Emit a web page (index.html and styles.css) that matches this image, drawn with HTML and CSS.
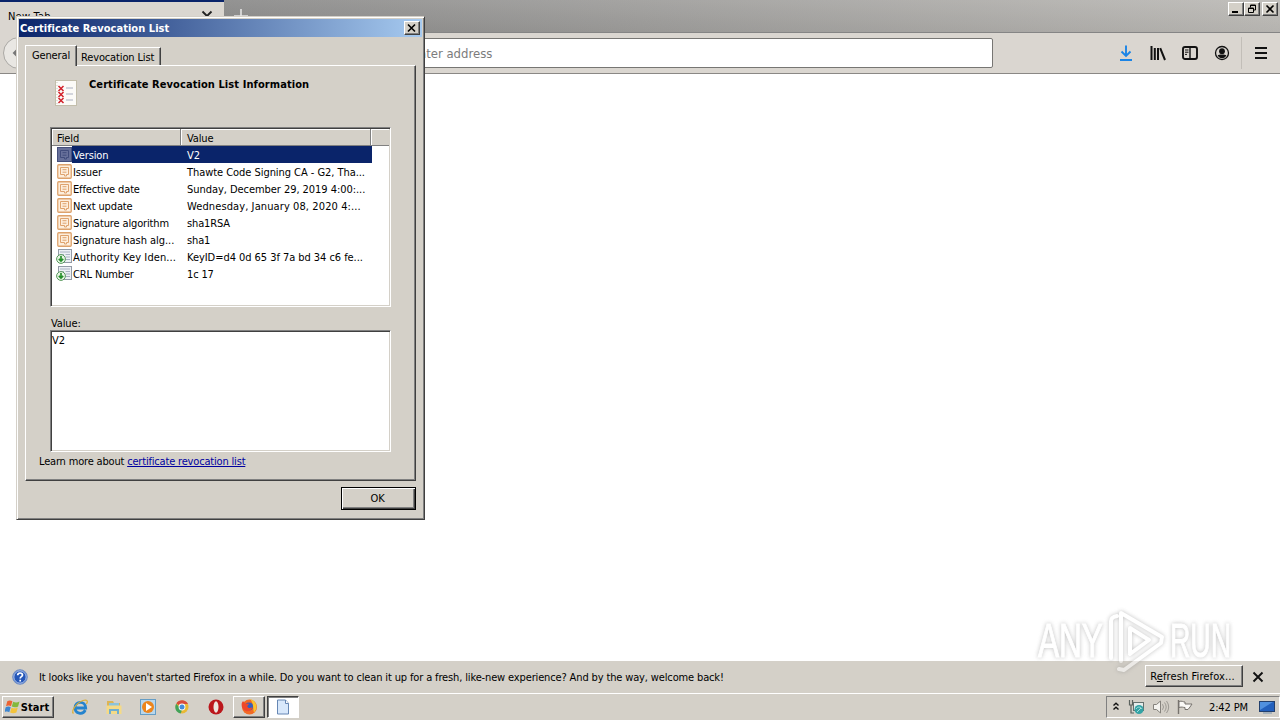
FILE: index.html
```html
<!DOCTYPE html>
<html lang="en">
<head>
    <meta charset="UTF-8">
    <title>New Tab</title>
    <link rel="stylesheet" href="styles.css">
</head>
<body>
    <!-- Shared list icons -->
    <svg class="defs" width="0" height="0">
        <symbol id="field" viewBox="0 0 15 15">
            <rect x=".75" y=".75" width="13.5" height="13.5" rx="1" fill="#fdeedc" stroke="#dda26c" stroke-width="1.3"/>
            <path d="M3.5 3.5h8v7h-2v1.5h-2v-1.5h-4zM5.5 5.7h4M5.5 8.2h4" fill="none" stroke="#dea36e"/>
        </symbol>
        <symbol id="ext" viewBox="0 0 16 15">
            <rect x="2.5" y=".5" width="13" height="13" fill="#edf0f5" stroke="#939ba7"/>
            <path d="M4 3h10M4 5.5h4M9.5 5.5H14M9.5 8H14M9.5 10.5H14" stroke="#a9b2c2"/>
            <circle cx="5" cy="10" r="4.4" fill="#e8f5e5" stroke="#55975a"/>
            <path d="M5 7v5M2.8 9.8L5 12l2.2-2.2" fill="none" stroke="#26902c" stroke-width="1.7"/>
        </symbol>
    </svg>

    <!-- Browser tabs -->
    <div class="tab-bar">
        <div class="browser-tab">
            <span>New Tab</span>
            <svg width="12" height="12" viewBox="0 0 12 12"><path d="M1.5 1.5l9 9M10.5 1.5l-9 9" stroke="#222" stroke-width="1.8"/></svg>
        </div>
        <svg class="new-tab" width="16" height="16" viewBox="0 0 16 16"><path d="M8 1v14M1 8h14" stroke="#e4e4e4" stroke-width="1.6"/></svg>
        <div class="window-buttons">
            <button><svg width="12" height="10" viewBox="0 0 12 10"><path d="M2 8h6" stroke="#000" stroke-width="2"/></svg></button>
            <button><svg width="12" height="10" viewBox="0 0 12 10"><path d="M4.5 3.5V1h5v5H8M4 1.5h6M2 4.5h6M2.5 4v4.5h5V4z" fill="none" stroke="#000"/></svg></button>
            <button class="last"><svg width="12" height="10" viewBox="0 0 12 10"><path d="M2.5 1.5l7 7M9.5 1.5l-7 7" stroke="#000" stroke-width="1.6"/></svg></button>
        </div>
    </div>

    <!-- Toolbar -->
    <div class="toolbar">
        <div class="back"><svg width="16" height="16" viewBox="0 0 16 16"><path d="M8 3L3 8l5 5M3 8h11" fill="none" stroke="#777" stroke-width="2"/></svg></div>
        <div class="url-bar">Search or enter address</div>
        <div class="tools">
            <svg width="16" height="16" viewBox="0 0 16 16"><path d="M8 .5v10M3.5 6.5L8 11l4.5-4.5M2 15h12" fill="none" stroke="#1a84e6" stroke-width="1.9"/></svg>
            <svg width="16" height="16" viewBox="0 0 16 16"><path d="M1.5 1v14M4.8 3v12M8 3v12M10.2 3.2L15 15" fill="none" stroke="#111" stroke-width="2"/></svg>
            <svg width="16" height="16" viewBox="0 0 16 16"><rect x="1" y="2" width="14" height="12" rx="2" fill="none" stroke="#111" stroke-width="1.9"/><path d="M8 2v12" stroke="#111" stroke-width="1.4"/><path d="M3 5h3.5M3 7.2h3.5M3 9.4h2" stroke="#111"/></svg>
            <svg width="16" height="16" viewBox="0 0 16 16"><circle cx="8" cy="8" r="6.5" fill="none" stroke="#111" stroke-width="1.3"/><circle cx="8" cy="6.2" r="2.9" fill="#111"/><path d="M3.6 10.2c1.5-.9 7.3-.9 8.8 0-.8 2-2.5 2.9-4.4 2.900s-3.600-.9-4.400-2.900z" fill="#111"/></svg>
            <span class="divider"></span>
            <svg width="14" height="16" viewBox="0 0 14 16"><path d="M1 3h12M1 8h12M1 13h12" stroke="#111" stroke-width="2"/></svg>
        </div>
    </div>

    <div class="content"></div>

    <!-- Notification -->
    <div class="notification">
        <svg width="16" height="16" viewBox="0 0 16 16"><circle cx="8" cy="8" r="7.3" fill="#2456b8" stroke="#7893c4"/><circle cx="8" cy="8" r="6.2" fill="none" stroke="#dce6fa" stroke-width=".8"/><path d="M5.7 6.3c0-3 4.8-3 4.800-.3 0 1.700-2.300 1.700-2.300 3.500M8.200 10.800v1.800" fill="none" stroke="#fff" stroke-width="1.7"/></svg>
        <span class="message">It looks like you haven't started Firefox in a while. Do you want to clean it up for a fresh, like-new experience? And by the way, welcome back!</span>
        <button class="refresh"><span>R<u>e</u>fresh Firefox...</span></button>
        <svg class="dismiss" width="12" height="12" viewBox="0 0 12 12"><path d="M1.5 1.5l9 9M10.5 1.5l-9 9" stroke="#111" stroke-width="1.9"/></svg>
    </div>

    <!-- Taskbar -->
    <div class="taskbar">
        <button class="start">
            <svg width="16" height="16" viewBox="1 0 16 16"><path d="M3.3 2.2C5 1 7 1.3 8.4 2.2L7 7.2C5.5 6.3 3.7 6.3 2 7.3z" fill="#ec6332"/><path d="M9.2 2.7c2 1 4.2.9 6.3-.3l-1.4 5c-2 1.2-4.3 1-6.3.2z" fill="#83b83c"/><path d="M1.7 8.3c1.7-1 3.5-1 5-.1l-1.4 5c-1.6-.9-3.3-.9-5 .1z" fill="#3d86d0"/><path d="M7.5 8.7c2 .9 4.2.9 6.3-.2l-1.4 5c-2 1.1-4.3 1-6.3.1z" fill="#f3c33c"/></svg>
            <span>Start</span>
        </button>
        <div class="quick-launch">
            <svg width="18" height="18" viewBox="0 0 18 18"><path d="M14.3 12.2c-2.5 5-10.3 3.8-10.3-2.5 0-7 10.5-7.5 10.7.3H5.5" fill="none" stroke="#2583cd" stroke-width="2.8"/><path d="M2.5 15.5C-1 13 7.5 2.3 14.5 2c2.5.1 2 2.4.9 4" fill="none" stroke="#dcae34" stroke-width="1.2"/></svg>
            <svg width="18" height="18" viewBox="0 0 18 18"><path d="M2 3h6l1 2h6v11H2z" fill="#ddb455"/><path d="M4 5h10v5H4z" fill="#8bc3dc"/><path d="M1.5 7.5h15V16h-15z" fill="#f5da86"/><path d="M5 16v-4h8v4" fill="none" stroke="#6faed0" stroke-width="2"/></svg>
            <svg width="18" height="18" viewBox="0 0 18 18"><rect x="1.5" y="1.5" width="15" height="15" fill="#b9d7ec" stroke="#659dc5"/><circle cx="9" cy="9" r="6" fill="#ed851c"/><path d="M7 5l6 4-6 4z" fill="#fff"/></svg>
            <svg width="18" height="18" viewBox="0 0 18 18"><circle cx="9" cy="9" r="6.5" fill="#e9b935"/><path d="M9 9L3.3 5.6C5.5 1.4 12.8 1 15 6H9z" fill="#d94b3c"/><path d="M3.2 5.8L9 12l-1.3 3.4C2.5 14.8 1.2 9.5 3.2 5.8z" fill="#42a25a"/><circle cx="9" cy="9" r="3.4" fill="#fff"/><circle cx="9" cy="9" r="2.5" fill="#468cdb"/></svg>
            <svg width="18" height="18" viewBox="0 0 18 18"><circle cx="9" cy="9" r="7.5" fill="#bb171c"/><ellipse cx="9" cy="9" rx="2.5" ry="5.8" fill="#ece6df"/></svg>
        </div>
        <div class="task firefox">
            <svg width="18" height="18" viewBox="0 0 18 18"><circle cx="9.5" cy="9" r="7.5" fill="#f26a25"/><path d="M10 1c6 1.5 9 8.5 4 13.5-1.3-4 .3-8.5-4-13.5z" fill="#f9c431"/><circle cx="9" cy="8.6" r="4" fill="#345fc0"/><path d="M1.8 5L3 3l2 2.5 4.2.2-2 2.5c1 2.4 3.6 2.3 5.2.8-.2 4.2-5.6 5.5-8.7 2.7C1.8 10 1.3 7.5 1.8 5z" fill="#ef482b"/></svg>
        </div>
        <div class="task active">
            <svg width="16" height="18" viewBox="0 0 16 18"><path d="M2.5 2h8l3 3.3V16h-11z" fill="#d8e8fb" stroke="#6687b4"/><path d="M10.5 2v3.5h3" fill="#fff" stroke="#6687b4"/></svg>
        </div>
        <div class="tray">
            <svg class="chevrons" width="8" height="12" viewBox="0 0 8 12"><path d="M1.5 4.5L4 2.2l2.5 2.3M1.5 8.5L4 6.2l2.5 2.3" fill="none" stroke="#111" stroke-width="1.4"/></svg>
            <svg width="17" height="16" viewBox="0 0 17 16"><path d="M1.5 1v5h3V1M3 6v8h3" fill="none" stroke="#5b625e" stroke-width="1.2"/><rect x="5.5" y="3.5" width="10" height="8" fill="#e5edec" stroke="#66716e"/><circle cx="11" cy="10.5" r="4.5" fill="#33a3a5"/><path d="M8 10c2-3 5-2 6 0M9 13l4-4" fill="none" stroke="#a6dfdd"/></svg>
            <svg width="18" height="16" viewBox="0 0 18 16"><path d="M1.5 5.5h3L8.5 2v12l-4-3.5h-3z" fill="#f4f3ef" stroke="#85827c"/><path d="M10.5 5.2q2 2.8 0 5.6M12.5 3.5q3.4 4.5 0 9M14.5 2q4.4 6 0 12" fill="none" stroke="#9c9993"/></svg>
            <svg width="17" height="16" viewBox="0 0 17 16"><path d="M1.5 1v14" stroke="#77736e" stroke-width="1.4"/><path d="M2 2.5c3-1 4 .5 6 .5v2h7l-2 3-2 2.5H8v-2c-2 0-3-1-6 0z" fill="#faf9f6" stroke="#77736e"/></svg>
            <span class="clock">2:42 PM</span>
            <svg width="16" height="14" viewBox="0 0 16 14"><rect x=".5" y="1.5" width="15" height="10" fill="#2461bd" stroke="#23406d"/><path d="M1 2h13L1 10z" fill="#5191df"/><path d="M4 13h9" stroke="#7893ae"/></svg>
        </div>
    </div>

    <!-- Certificate dialog -->
    <div class="dialog">
        <div class="title-bar">
            <span>Certificate Revocation List</span>
            <button><svg width="10" height="10" viewBox="0 0 10 10"><path d="M1 1.5l7 7M8 1.5l-7 7" stroke="#000" stroke-width="1.6"/></svg></button>
        </div>
        <div class="tabs">
            <div class="tab selected"><span>General</span></div>
            <div class="tab"><span>Revocation List</span></div>
        </div>
        <div class="panel">
            <div class="info">
                <svg width="24" height="28" viewBox="0 0 24 28"><rect x="1.5" y="1.5" width="21" height="25" fill="#fcfbf8" stroke="#c3beab"/><path d="M3 3v22" stroke="#c9c7bd" stroke-dasharray="1 2"/><path d="M4.500 7l5 5M9.500 7l-5 5M4.500 13l5 5M9.500 13l-5 5M4.500 19l5 5M9.500 19l-5 5" stroke="#d2222b" stroke-width="1.500"/><path d="M12 9h7M12 15h7M12 21h7" stroke="#c5c9d2" stroke-width="1.3"/></svg>
                <span>Certificate Revocation List Information</span>
            </div>
            <div class="list">
                <div class="list-head"><span>Field</span><span>Value</span><span></span></div>
                <div class="row chosen">
                    <svg viewBox="0 0 15 15"><rect x=".5" y=".5" width="14" height="14" fill="#67709a" stroke="#454f7c"/><path d="M3.5 3.5h8v7h-2v1.5h-2v-1.5h-4zM5.5 5.7h4M5.5 8.2h4" fill="none" stroke="#414c7c"/></svg>
                    <div class="label"><span>Version</span><span>V2</span></div>
                </div>
                <div class="row"><svg><use href="#field"/></svg><div class="label"><span>Issuer</span><span class="long">Thawte Code Signing CA - G2, Tha...</span></div></div>
                <div class="row"><svg><use href="#field"/></svg><div class="label"><span>Effective date</span><span class="long">Sunday, December 29, 2019 4:00:...</span></div></div>
                <div class="row"><svg><use href="#field"/></svg><div class="label"><span>Next update</span><span class="longer">Wednesday, January 08, 2020 4:...</span></div></div>
                <div class="row"><svg><use href="#field"/></svg><div class="label"><span>Signature algorithm</span><span>sha1RSA</span></div></div>
                <div class="row"><svg><use href="#field"/></svg><div class="label"><span class="long">Signature hash alg...</span><span>sha1</span></div></div>
                <div class="row"><svg class="ext"><use href="#ext"/></svg><div class="label"><span class="longer">Authority Key Iden...</span><span class="long">KeyID=d4 0d 65 3f 7a bd 34 c6 fe...</span></div></div>
                <div class="row"><svg class="ext"><use href="#ext"/></svg><div class="label"><span>CRL Number</span><span>1c 17</span></div></div>
            </div>
            <div class="value-label">Value:</div>
            <div class="value-box">V2</div>
            <div class="learn">Learn more about <a href="#">certificate revocation list</a></div>
        </div>
        <div class="actions"><button>OK</button></div>
    </div>

    <!-- Watermark -->
    <div class="watermark">
        <span class="any">ANY</span>
        <svg width="60" height="66" viewBox="0 0 60 66"><path d="M5 50V13q0-4 6-5M15 53V5l41 24-1 6-37 27-5-1M24 45V20l19 12-19 14" fill="none" stroke="#fff" stroke-width="4" stroke-linejoin="round" stroke-linecap="round"/></svg>
        <span class="run">RUN</span>
    </div>
</body>
</html>
```
FILE: styles.css
```css
* {
    box-sizing: border-box;
}

body {
    margin: 0;
    width: 1280px;
    height: 720px;
    overflow: hidden;
    display: flex;
    flex-direction: column;
    background: #fff;
    color: #000;
    font-family: "DejaVu Sans Condensed", "DejaVu Sans", sans-serif;
    font-stretch: condensed;
    font-size: 11px;
    letter-spacing: -0.14px;
    line-height: 17px;
    white-space: nowrap;
}

svg {
    display: block;
    flex: none;
}

button {
    font: inherit;
    letter-spacing: inherit;
    color: #000;
    background: #d4d0c8;
    border: 1px solid;
    border-color: #fff #404040 #404040 #fff;
    box-shadow: inset -1px -1px #808080;
    padding: 0;
    display: flex;
    align-items: center;
    justify-content: center;
}

.defs {
    position: absolute;
}

/* Browser */
.tab-bar {
    height: 33px;
    flex: none;
    display: flex;
    background: linear-gradient(to bottom, rgba(255, 255, 255, 0.08), rgba(0, 0, 0, 0.04)), linear-gradient(to right, #808080, #bcbab6);
    border-bottom: 1px solid #858585;
}

.browser-tab {
    width: 224px;
    height: 33px;
    border-top: 2px solid #0a246a;
    background: #dad6d0;
    padding: 6px 11px 0 8px;
    display: flex;
    justify-content: space-between;
    letter-spacing: 0.2px;
}

.browser-tab svg {
    margin-top: 2px;
}

.new-tab {
    margin: 8px 0 0 9px;
}

.window-buttons {
    margin: 2px 2px 0 auto;
    display: flex;
}

.window-buttons button {
    width: 16px;
    height: 14px;
}

.window-buttons .last {
    margin-left: 2px;
}

.toolbar {
    height: 41px;
    flex: none;
    display: flex;
    align-items: center;
    background: #dad6d0;
    border-bottom: 1px solid #8a8885;
}

.back {
    width: 32px;
    height: 32px;
    margin-left: 3px;
    padding: 7px;
    border: 1px solid #aaa8a4;
    border-radius: 50%;
    background: #e9e7e3;
}

.url-bar {
    margin-left: 300px;
    width: 658px;
    height: 30px;
    border: 1px solid #777673;
    border-radius: 2px;
    background: #fff;
    padding-left: 16px;
    color: #7c7c7c;
    font-size: 13px;
    letter-spacing: 0;
    line-height: 30px;
}

.tools {
    margin: 0 12px 0 auto;
    display: flex;
    align-items: center;
    gap: 16px;
}

.divider {
    width: 1px;
    height: 32px;
    margin: 0 -4px 0 -5px;
    background: #c2beb8;
}

.content {
    flex: 1;
}

.notification {
    height: 32px;
    flex: none;
    display: flex;
    align-items: center;
    background: #d4d0c8;
    padding: 0 16px 0 12px;
}

.message {
    margin-left: 11px;
}

.refresh {
    width: 98px;
    height: 22px;
    margin: -2px 9px 0 auto;
    padding-right: 3px;
    letter-spacing: 0.1px;
}

.taskbar {
    height: 27px;
    flex: none;
    display: flex;
    align-items: center;
    border-top: 1px solid #fff;
    background: #d4d0c8;
    padding: 0 0 0 2px;
}

.start {
    width: 52px;
    height: 22px;
    padding-right: 2px;
    font-weight: bold;
    letter-spacing: 0.1px;
}

.quick-launch {
    display: flex;
    gap: 16px;
    margin: 0 8px 0 17px;
}

.task {
    width: 32px;
    height: 22px;
    margin-right: 2px;
    border: 1px solid;
    border-color: #fff #404040 #404040 #fff;
    box-shadow: inset -1px -1px #808080;
    display: flex;
    align-items: center;
    justify-content: center;
}

.task.active {
    background: #fff;
    border-color: #404040 #fff #fff #404040;
    box-shadow: inset 1px 1px #808080;
}

.tray {
    width: 174px;
    height: 22px;
    margin-left: auto;
    border: 1px solid;
    border-color: #808080 #fff #fff #808080;
    display: flex;
    align-items: center;
    padding-left: 5px;
}

.tray svg {
    margin-right: 7px;
}

.tray .chevrons {
    margin-right: 8px;
}

.clock {
    margin: 0 11px 0 8px;
}

/* Dialog */
.dialog {
    position: absolute;
    left: 16px;
    top: 16px;
    width: 409px;
    height: 504px;
    padding: 2px 1px;
    background: #d4d0c8;
    border: 1px solid;
    border-color: #d4d0c8 #404040 #404040 #d4d0c8;
    box-shadow: inset 1px 1px #fff, inset -1px -1px #808080;
}

.title-bar {
    height: 18px;
    margin: 0 1px;
    padding: 0 2px 0 1px;
    display: flex;
    align-items: center;
    justify-content: space-between;
    color: #fff;
    font-weight: bold;
    letter-spacing: 0.05px;
    background: linear-gradient(to right, #0a246a, #a6caf0);
}

.title-bar button {
    width: 16px;
    height: 14px;
}

.tabs {
    height: 28px;
    padding: 8px 0 0 7px;
    display: flex;
    align-items: flex-end;
}

.tab {
    width: 84px;
    height: 18px;
    padding-left: 4px;
    line-height: 19px;
    border: 1px solid;
    border-color: #fff #404040 transparent #fff;
    border-left: 0;
    border-bottom: 0;
    box-shadow: inset -1px 0 #808080;
}

.tab.selected {
    width: 52px;
    height: 21px;
    margin-bottom: -1px;
    padding-left: 6px;
    border-left: 1px solid #fff;
    border-bottom: 0;
    background: #d4d0c8;
    z-index: 1;
}

.panel {
    width: 391px;
    height: 416px;
    margin-left: 7px;
    padding: 0 24px;
    border: 1px solid;
    border-color: #fff #404040 #404040 #fff;
    box-shadow: inset -1px -1px #808080;
}

.info {
    height: 61px;
    padding: 13px 0 0 4px;
    display: flex;
    gap: 11px;
    font-weight: bold;
    letter-spacing: 0.08px;
}

.info span {
    margin-top: -3px;
}

.list,
.value-box {
    width: 341px;
    background: #fff;
    border: 1px solid;
    border-color: #808080 #fff #fff #808080;
    box-shadow: inset 1px 1px #404040, inset -1px -1px #d4d0c8;
}

.list {
    height: 180px;
    padding: 1px;
}

.list-head {
    height: 17px;
    display: flex;
    line-height: 19px;
    background: #d4d0c8;
    border-bottom: 1px solid #808080;
}

.list-head span {
    width: 190px;
    height: 16px;
    padding-left: 6px;
    border-right: 1px solid #808080;
    box-shadow: inset 1px 1px #fff;
}

.list-head span:first-child {
    width: 129px;
    padding-left: 5px;
}

.list-head span:last-child {
    width: 18px;
    border: 0;
}

.row {
    height: 17px;
    display: flex;
    align-items: center;
    padding-left: 5px;
    line-height: 19px;
}

.row svg {
    width: 15px;
    height: 15px;
}

.row .ext {
    width: 16px;
    margin-left: -1px;
}

.label {
    width: 300px;
    height: 17px;
    padding-left: 1px;
    display: flex;
}

.label span:first-child {
    width: 114px;
}

.label .long {
    letter-spacing: -0.05px;
}

.label .longer {
    letter-spacing: 0.1px;
}

.chosen .label {
    background: #0a246a;
    color: #fff;
}

.value-label {
    height: 23px;
    padding: 8px 0 0 1px;
}

.value-box {
    height: 122px;
    padding: 1px 1px 0;
}

.learn {
    margin-left: -11px;
    padding-top: 1px;
    letter-spacing: -0.18px;
}

.learn a {
    color: #0000a0;
}

.actions {
    display: flex;
    justify-content: flex-end;
    padding: 6px 7px 0 0;
}

.actions button {
    width: 75px;
    height: 23px;
    padding-right: 2px;
    border: 1px solid #000;
    box-shadow: inset 1px 1px #fff, inset -1px -1px #404040, inset -2px -2px #808080;
}

/* Watermark */
.watermark {
    position: absolute;
    left: 1038px;
    top: 608px;
    display: flex;
    align-items: center;
    gap: 4px;
    opacity: 0.55;
    color: #fff;
    font: 48px/66px "Liberation Sans", Arial, sans-serif;
    -webkit-text-stroke: 1px #fff;
    filter: drop-shadow(0 0 2px #8c8c8c);
}

.watermark span {
    width: 64px;
    transform: scaleX(0.66);
    transform-origin: left;
}

.watermark .run {
    transform: scaleX(0.59);
}
```
